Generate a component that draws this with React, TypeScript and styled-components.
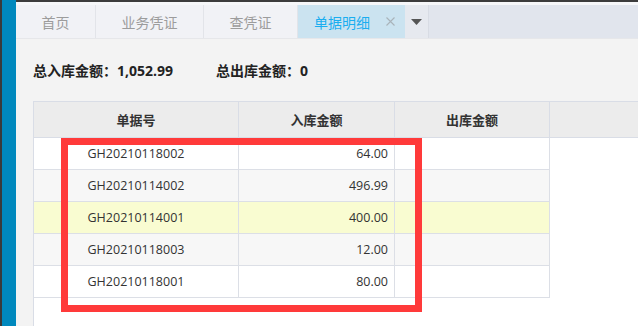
import React from "react";
import styled, { createGlobalStyle } from "styled-components";

const Global = createGlobalStyle`
  html, body { margin: 0; padding: 0; height: 100%; overflow: hidden; }
  body { font-family: "Open Sans", "Noto Sans CJK SC", sans-serif; background: #f3f3f3; }
  #root { height: 100%; }
`;

const Page = styled.div`
  display: flex;
  height: 100vh;
  width: 100vw;
  overflow: hidden;
`;

const SideRail = styled.div`
  width: 14px;
  flex: none;
  background: #0088bd;
  border-left: 2px solid #3a3a3a;
`;

const Main = styled.div`
  flex: 1;
  display: flex;
  flex-direction: column;
  min-width: 0;
`;

const TopStrip = styled.div`
  height: 2px;
  background: #3c3c3c;
  border-bottom: 3px solid #f6f7f9;
  flex: none;
`;

const TabBar = styled.div`
  display: flex;
  height: 33px;
  flex: none;
  background: #e1e5ed;
  border-bottom: 1px solid #e6e7ea;
`;

const Tab = styled.div<{ $active?: boolean }>`
  display: flex;
  align-items: center;
  gap: 16px;
  padding: ${(p) => (p.$active ? "0 10px 0 16px" : "0 25.5px")};
  background: ${(p) => (p.$active ? "#cbe3f0" : "#f1f2f6")};
  color: ${(p) => (p.$active ? "#1aaef0" : "#9c9c9c")};
  border-right: ${(p) => (p.$active ? "none" : "1px solid #e2e4e9")};
  font-family: "Noto Sans CJK SC", sans-serif;
  font-size: 14px;
  white-space: nowrap;
`;

const TabMenu = styled.div`
  width: 23px;
  display: flex;
  align-items: center;
  justify-content: center;
  background: #e6e9ef;
  border-right: 1px solid #d8dce4;
`;

const Content = styled.div`
  flex: 1;
  display: flex;
  flex-direction: column;
  padding: 16px 0 0 17px;
  min-height: 0;
`;

const Summary = styled.div`
  display: flex;
  align-items: center;
  gap: 43px;
  height: 30px;
  margin-bottom: 16px;
  font-family: "Open Sans", "Noto Sans CJK SC", sans-serif;
  font-weight: 700;
  font-size: 14px;
  color: #222;
`;

const Grid = styled.div`
  position: relative;
  flex: 1;
  background: #fff;
  border-left: 1px solid #d9dde6;
  border-top: 1px solid #d9dde6;
`;

const HeaderRow = styled.div`
  display: flex;
  height: 35px;
  background: #ececec;
  border-bottom: 1px solid #d9dde6;
`;

const HeadCell = styled.div<{ $w: number }>`
  box-sizing: border-box;
  width: ${(p) => p.$w}px;
  display: flex;
  align-items: center;
  justify-content: center;
  border-right: 1px solid #d9dde6;
  font-family: "Noto Sans CJK SC", sans-serif;
  font-weight: 700;
  font-size: 13px;
  color: #333;
`;

const Row = styled.div<{ $bg: string }>`
  display: flex;
  width: 516px;
  height: 32px;
  box-sizing: border-box;
  background: ${(p) => p.$bg};
  border-bottom: 1px solid #dcdfe6;
`;

const Cell = styled.div<{ $w: number; $align?: "center" | "right" }>`
  box-sizing: border-box;
  width: ${(p) => p.$w}px;
  display: flex;
  align-items: center;
  justify-content: ${(p) => (p.$align === "right" ? "flex-end" : "center")};
  padding-right: ${(p) => (p.$align === "right" ? "6px" : "0")};
  border-right: 1px solid #dcdfe6;
  font-family: "Open Sans", "Noto Sans CJK SC", sans-serif;
  font-size: 12.5px;
  color: #333;
`;

const Highlight = styled.div`
  position: absolute;
  left: 27px;
  top: 36px;
  width: 361px;
  height: 174px;
  box-sizing: border-box;
  border: 7px solid #ff3a3a;
  pointer-events: none;
`;

const cols = [205, 156, 155];

const rows = [
  { no: "GH20210118002", amt: "64.00", bg: "#ffffff" },
  { no: "GH20210114002", amt: "496.99", bg: "#f7f7f7" },
  { no: "GH20210114001", amt: "400.00", bg: "#f9fcd1" },
  { no: "GH20210118003", amt: "12.00", bg: "#f7f7f7" },
  { no: "GH20210118001", amt: "80.00", bg: "#ffffff" },
];

export default function App() {
  return (
    <Page>
      <Global />
      <SideRail />
      <Main>
        <TopStrip />
        <TabBar>
          <Tab>首页</Tab>
          <Tab>业务凭证</Tab>
          <Tab>查凭证</Tab>
          <Tab $active>
            单据明细
            <svg width="9" height="9" viewBox="0 0 9 9">
              <path d="M0.5 0.5 L8.5 8.5 M8.5 0.5 L0.5 8.5" stroke="#a9b3ba" strokeWidth="1.1" />
            </svg>
          </Tab>
          <TabMenu>
            <svg width="11" height="6" viewBox="0 0 11 6">
              <path d="M0 0 H11 L5.5 6 Z" fill="#555" />
            </svg>
          </TabMenu>
        </TabBar>
        <Content>
          <Summary>
            <span>总入库金额：1,052.99</span>
            <span>总出库金额：0</span>
          </Summary>
          <Grid>
            <HeaderRow>
              <HeadCell $w={cols[0]}>单据号</HeadCell>
              <HeadCell $w={cols[1]}>入库金额</HeadCell>
              <HeadCell $w={cols[2]}>出库金额</HeadCell>
            </HeaderRow>
            {rows.map((r) => (
              <Row key={r.no} $bg={r.bg}>
                <Cell $w={cols[0]}>{r.no}</Cell>
                <Cell $w={cols[1]} $align="right">{r.amt}</Cell>
                <Cell $w={cols[2]} />
              </Row>
            ))}
            <Highlight />
          </Grid>
        </Content>
      </Main>
    </Page>
  );
}
